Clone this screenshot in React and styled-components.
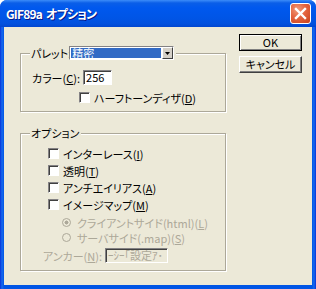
import React from 'react';
import styled, { createGlobalStyle } from 'styled-components';

const GlobalStyle = createGlobalStyle`
  html, body {
    margin: 0;
    padding: 0;
    background: #ffffff;
  }
  body {
    font-family: 'Noto Sans CJK JP', 'DejaVu Sans', sans-serif;
    font-size: 11px;
    font-feature-settings: 'palt';
  }
`;

const App = () => {
  return (
    <>
      <GlobalStyle />
      <Window>
        <TitleBar>
          <Title>GIF89a オプション</Title>
          <CloseButton>
            <svg width="13" height="13" viewBox="0 0 13 13">
              <path d="M2 2 L11 11 M11 2 L2 11" stroke="#fff" strokeWidth="2.4" strokeLinecap="square" />
            </svg>
          </CloseButton>
        </TitleBar>
        <Body>
          <LeftColumn>
            <GroupBox $height={66}>
              <Legend>
                <span>パレット:</span>
                <Combo>
                  <ComboValue>精密</ComboValue>
                  <ComboArrow>
                    <svg width="5" height="3" viewBox="0 0 5 3">
                      <path d="M0 0 H5 L2.5 3 Z" fill="#000" />
                    </svg>
                  </ComboArrow>
                </Combo>
              </Legend>
              <FieldRow $indent={0} $top={10}>
                <Label>
                  カラー(<u>C</u>):
                </Label>
                <TextBox $width={29}>256</TextBox>
              </FieldRow>
              <CheckRow $indent={47} $top={4}>
                <CheckBox />
                <span>
                  ハーフトーンディザ(<u>D</u>)
                </span>
              </CheckRow>
            </GroupBox>

            <GroupBox $height={145}>
              <Legend>
                <span>オプション</span>
              </Legend>
              <CheckRow $indent={16} $top={5}>
                <CheckBox />
                <span>
                  インターレース(<u>I</u>)
                </span>
              </CheckRow>
              <CheckRow $indent={16}>
                <CheckBox />
                <span>
                  透明(<u>T</u>)
                </span>
              </CheckRow>
              <CheckRow $indent={16}>
                <CheckBox />
                <span>
                  アンチエイリアス(<u>A</u>)
                </span>
              </CheckRow>
              <CheckRow $indent={16}>
                <CheckBox />
                <span>
                  イメージマップ(<u>M</u>)
                </span>
              </CheckRow>
              <RadioRow $top={2}>
                <Radio $checked />
                <span>
                  クライアントサイド(html)(<u>L</u>)
                </span>
              </RadioRow>
              <RadioRow>
                <Radio />
                <span>
                  サーバサイド(.map)(<u>S</u>)
                </span>
              </RadioRow>
              <FieldRow $indent={11} $top={3} $disabled>
                <Label>
                  アンカー(<u>N</u>):
                </Label>
                <TextBox $width={63} $disabled>
                  ｰｼｰ｢設定ｱ･
                </TextBox>
              </FieldRow>
            </GroupBox>
          </LeftColumn>

          <RightColumn>
            <Button $default>OK</Button>
            <Button>キャンセル</Button>
          </RightColumn>
        </Body>
      </Window>
    </>
  );
};

export default App;

const Window = styled.div`
  width: 316px;
  height: 289px;
  box-sizing: border-box;
  display: flex;
  flex-direction: column;
  background: linear-gradient(90deg, #0831d9 0, #166aee 2px, #0055e5 4px, #0055e5 312px, #166aee 314px, #0831d9 316px);
  border-radius: 7px 7px 0 0;
  overflow: hidden;
  padding: 0 4px 4px 4px;
`;

const TitleBar = styled.div`
  height: 27px;
  margin: 0 -4px;
  padding: 0 5px 0 6px;
  display: flex;
  align-items: center;
  justify-content: space-between;
  background: linear-gradient(
    180deg,
    #3c8cf9 0,
    #0a5ee8 3px,
    #0058ee 8px,
    #0055e6 18px,
    #0250dd 24px,
    #0146cf 27px
  );
`;

const Title = styled.div`
  color: #fff;
  font-family: 'Noto Sans CJK JP', 'DejaVu Sans', sans-serif;
  font-weight: 700;
  font-size: 12px;
  letter-spacing: -0.8px;
  word-spacing: 2px;
  text-shadow: 1px 1px 0 #0a1883;
  margin-top: -1px;
`;

const CloseButton = styled.div`
  width: 21px;
  height: 21px;
  box-sizing: border-box;
  border: 1px solid #fff;
  border-radius: 3px;
  display: flex;
  align-items: center;
  justify-content: center;
  background: radial-gradient(circle at 35% 30%, #f09b7c 0, #e4643f 45%, #c8411c 100%);
`;

const Body = styled.div`
  flex: 1;
  background: #ece9d8;
  display: flex;
  align-items: flex-start;
  padding: 18px 10px 0 16px;
  gap: 13px;
`;

const LeftColumn = styled.div`
  display: flex;
  flex-direction: column;
  gap: 14px;
  margin-top: 1px;
`;

const GroupBox = styled.fieldset`
  width: 206px;
  height: ${(p) => p.$height}px;
  box-sizing: border-box;
  margin: 0;
  padding: 0 0 0 11px;
  border: 1px solid #aca899;
  box-shadow: 1px 1px 0 #fff, inset 1px 1px 0 #fff;
  display: flex;
  flex-direction: column;
  min-inline-size: 0;
`;

const Legend = styled.legend`
  display: flex;
  align-items: center;
  padding: 0 2px 0 1px;
  margin-left: -2px;
  height: 14px;
  color: #000;
  background: #ece9d8;
  line-height: 14px;
`;

const Combo = styled.div`
  width: 105px;
  height: 14px;
  box-sizing: border-box;
  display: flex;
  align-items: stretch;
  border: 1px solid;
  border-color: #848284 #fff #fff #848284;
  background: #fff;
  margin-left: -2px;
`;

const ComboValue = styled.div`
  flex: 1;
  margin: 1px;
  background: #316ac5;
  color: #fff;
  line-height: 10px;
  padding-left: 1px;
  font-size: 11px;
`;

const ComboArrow = styled.div`
  width: 11px;
  box-sizing: border-box;
  background: #d4d0c8;
  border: 1px solid;
  border-color: #fff #404040 #404040 #fff;
  display: flex;
  align-items: center;
  justify-content: center;
`;

const FieldRow = styled.div`
  display: flex;
  align-items: center;
  gap: 3px;
  height: 15px;
  margin-top: ${(p) => p.$top || 0}px;
  margin-left: ${(p) => p.$indent}px;
  color: ${(p) => (p.$disabled ? '#aca899' : '#000')};
`;

const Label = styled.span`
  white-space: nowrap;
`;

const TextBox = styled.div`
  width: ${(p) => p.$width}px;
  height: 15px;
  box-sizing: border-box;
  border: 1px solid;
  border-color: #848284 #fff #fff #848284;
  box-shadow: inset 1px 1px 0 #404040;
  background: ${(p) => (p.$disabled ? '#ece9d8' : '#fff')};
  color: ${(p) => (p.$disabled ? '#aca899' : '#000')};
  padding-left: 2px;
  line-height: 13px;
  overflow: hidden;
  white-space: nowrap;
`;

const CheckRow = styled.div`
  display: flex;
  align-items: center;
  gap: 4px;
  height: 17px;
  margin-left: ${(p) => p.$indent}px;
  margin-top: ${(p) => p.$top || 0}px;
  color: #000;
  white-space: nowrap;
`;

const CheckBox = styled.span`
  width: 11px;
  height: 11px;
  box-sizing: border-box;
  border: 1px solid;
  border-color: #848284 #fff #fff #848284;
  box-shadow: inset 1px 1px 0 #404040;
  background: #fff;
  flex-shrink: 0;
`;

const RadioRow = styled.div`
  display: flex;
  align-items: center;
  gap: 6px;
  height: 15px;
  margin-left: 30px;
  margin-top: ${(p) => p.$top || 0}px;
  color: #aca899;
  white-space: nowrap;
`;

const Radio = styled.span`
  width: 9px;
  height: 9px;
  box-sizing: border-box;
  border-radius: 50%;
  border: 1px solid #aca899;
  background: ${(p) =>
    p.$checked ? 'radial-gradient(circle, #aca899 0, #aca899 1.8px, #ece9d8 2.2px)' : '#ece9d8'};
  flex-shrink: 0;
`;

const RightColumn = styled.div`
  display: flex;
  flex-direction: column;
  gap: 5px;
  margin-top: -11px;
`;

const Button = styled.div`
  width: 63px;
  height: 17px;
  box-sizing: border-box;
  display: flex;
  align-items: center;
  justify-content: center;
  background: #ece9d8;
  color: #000;
  border: 1px solid;
  border-color: ${(p) => (p.$default ? '#000' : '#fff #404040 #404040 #fff')};
  box-shadow: ${(p) =>
    p.$default
      ? 'inset 1px 1px 0 #fff, inset -1px -1px 0 #808080'
      : 'inset -1px -1px 0 #808080'};
  font-size: 11px;
  line-height: 1;
`;
